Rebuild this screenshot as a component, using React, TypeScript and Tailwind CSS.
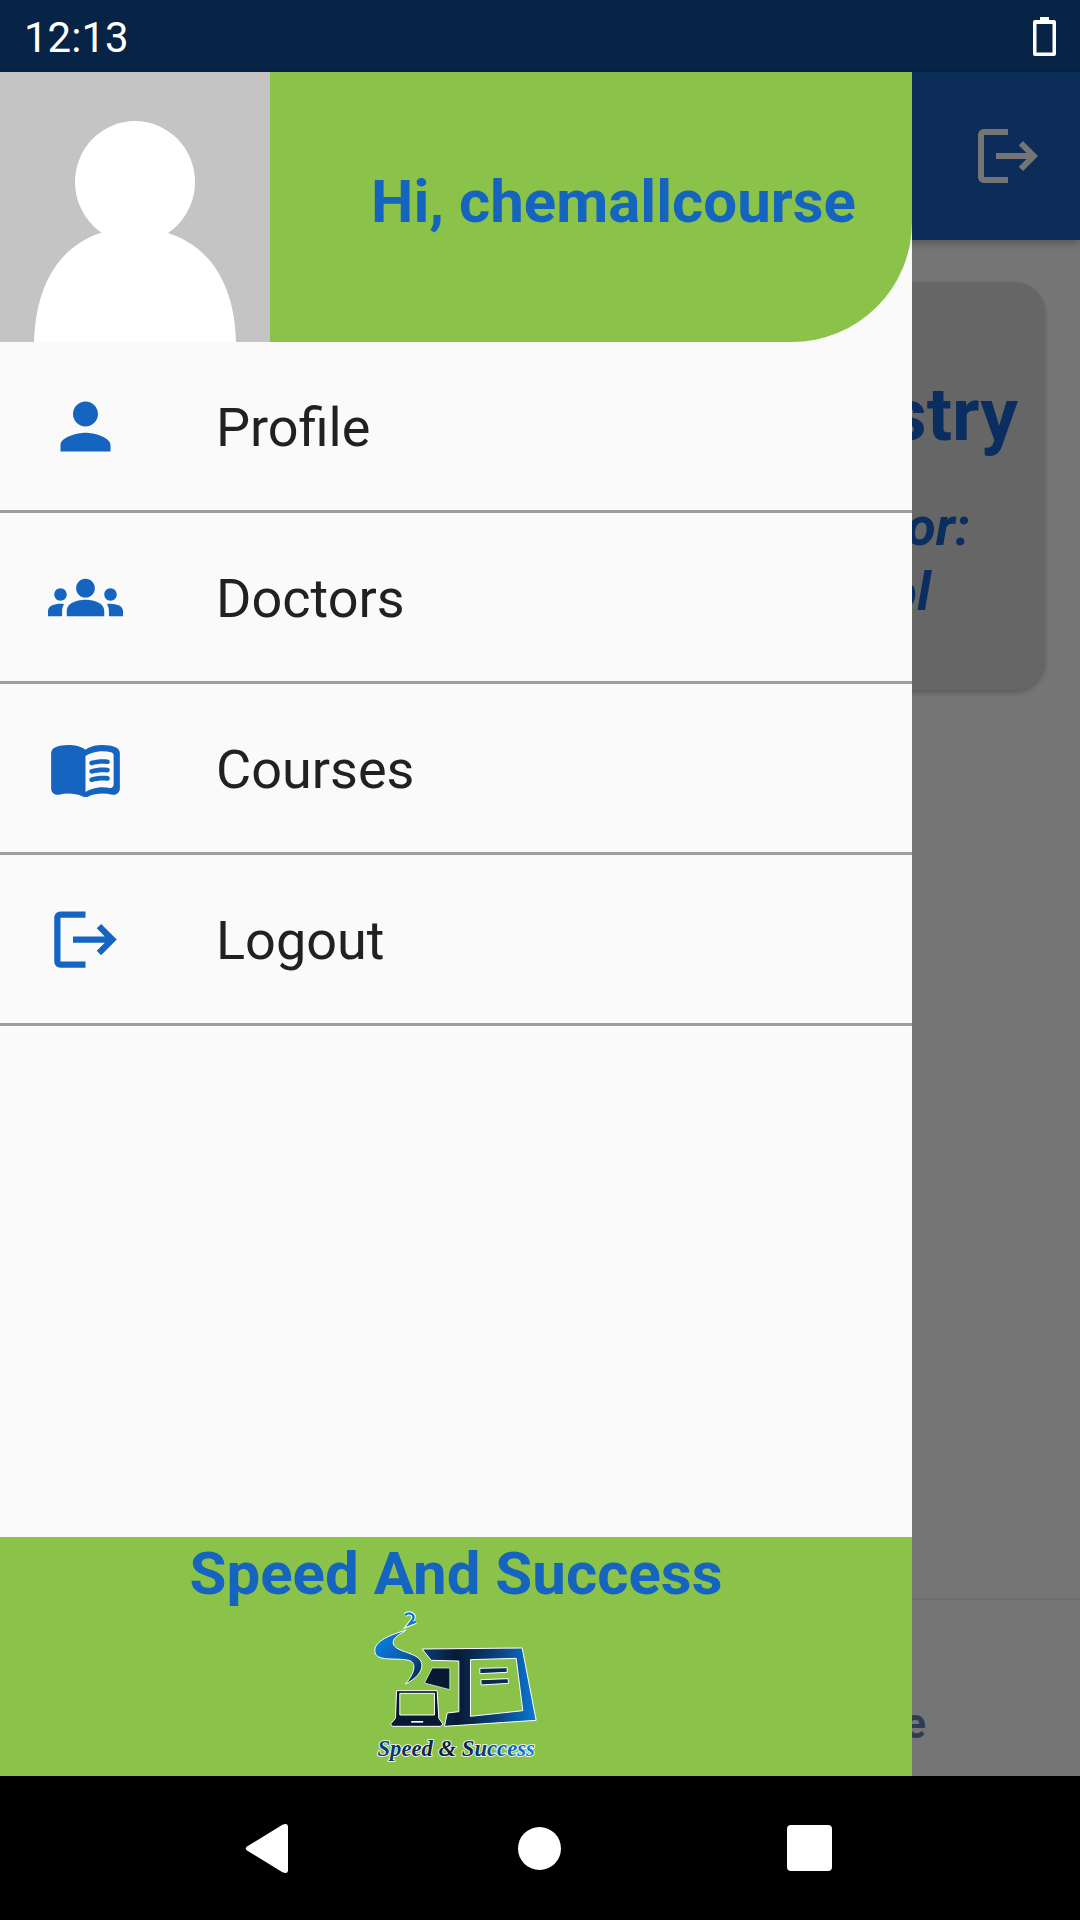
import { MdPerson, MdGroups, MdLogout } from 'react-icons/md';

// rounded menu_book, the package only has the square one
function BookIcon() {
  return (
    <svg viewBox="0 0 24 24" width={75} height={75} fill="#1565c0">
      <path d="M17.5 4.5c-1.95 0-4.05.4-5.5 1.5-1.45-1.1-3.55-1.5-5.5-1.5-1.45 0-2.99.22-4.28.79C1.49 5.62 1 6.33 1 7.14v11.28c0 1.3 1.22 2.26 2.48 1.94.98-.25 2.02-.36 3.02-.36 1.56 0 3.22.26 4.56.92.6.3 1.28.3 1.87 0 1.34-.67 3-.92 4.56-.92 1 0 2.04.11 3.02.36 1.26.33 2.48-.63 2.48-1.94V7.14c0-.81-.49-1.52-1.22-1.85-1.28-.57-2.82-.79-4.27-.79zM21 17.23c0 .63-.58 1.09-1.2.98-.75-.14-1.53-.2-2.3-.2-1.7 0-4.15.65-5.5 1.5V8c1.35-.85 3.8-1.5 5.5-1.5.92 0 1.83.09 2.7.28.46.1.8.51.8.98v9.47z" />
      <path d="M13.98 11.01c-.32 0-.61-.2-.71-.52-.13-.39.09-.82.48-.94 1.54-.5 3.53-.66 5.36-.45.41.05.71.42.66.83-.05.41-.42.71-.83.66-1.62-.19-3.39-.04-4.73.39-.08.01-.16.03-.23.03zm0 2.66c-.32 0-.61-.2-.71-.52-.13-.39.09-.82.48-.94 1.53-.5 3.53-.66 5.36-.45.41.05.71.42.66.83-.05.41-.42.71-.83.66-1.62-.19-3.39-.04-4.73.39-.08.02-.16.03-.23.03zm0 2.66c-.32 0-.61-.2-.71-.52-.13-.39.09-.82.48-.94 1.53-.5 3.53-.66 5.36-.45.41.05.71.42.66.83-.05.41-.42.7-.83.66-1.62-.19-3.39-.04-4.73.39-.08.02-.16.03-.23.03z" />
    </svg>
  );
}

const menuItems = [
  { label: 'Profile', icon: <MdPerson size={75} color="#1565c0" /> },
  { label: 'Doctors', icon: <MdGroups size={75} color="#1565c0" /> },
  { label: 'Courses', icon: <BookIcon /> },
  { label: 'Logout', icon: <MdLogout size={75} color="#1565c0" /> },
];

function Avatar() {
  return (
    <svg viewBox="0 0 270 270" className="w-[270px] h-[270px] shrink-0 bg-[#c4c4c4]">
      <ellipse cx="135" cy="110" rx="60" ry="61" fill="#fff" />
      <path d="M34 270 C36 205 65 172 103 160 L165 160 C205 172 234 205 236 270 Z" fill="#fff" />
    </svg>
  );
}

function Logo() {
  return (
    <svg viewBox="95 240 500 465" className="w-[167px] h-[155px] -translate-x-[1px]">
      <defs>
        <linearGradient id="logoBlue" x1="0" y1="0" x2="1" y2="1">
          <stop offset="0%" stopColor="#0a86ea" />
          <stop offset="60%" stopColor="#0a5aa8" />
          <stop offset="100%" stopColor="#061a33" />
        </linearGradient>
        <linearGradient id="logoBook" x1="0" y1="0" x2="1" y2="0">
          <stop offset="0%" stopColor="#0a3f78" />
          <stop offset="30%" stopColor="#071a33" />
          <stop offset="65%" stopColor="#0b3f7a" />
          <stop offset="100%" stopColor="#0a78d8" />
        </linearGradient>
        <linearGradient id="logoText" x1="0" y1="0" x2="1" y2="0">
          <stop offset="0%" stopColor="#0a3f78" />
          <stop offset="50%" stopColor="#071a33" />
          <stop offset="100%" stopColor="#0a86ea" />
        </linearGradient>
      </defs>
      <path d="M194 258 C206 248 224 256 218 270 L206 286 L226 278" fill="none" stroke="#fff" strokeWidth="13" />
      <path d="M194 258 C206 248 224 256 218 270 L206 286 L226 278" fill="none" stroke="#0a78d8" strokeWidth="7" />
      <path
        d="M197 303 C150 318 103 335 103 365 C103 400 165 385 205 394 C228 400 225 430 195 465 C235 445 255 415 238 392 C220 368 158 368 158 340 C158 325 180 315 197 303 Z"
        fill="url(#logoBlue)"
        stroke="#fff"
        strokeWidth="3"
      />
      <path
        d="M245 360 L545 357 L587 574 L312 592 L320 552 L355 548 L355 396 L272 394 Z M390 392 L390 562 L547 545 L527 388 Z"
        fill="url(#logoBook)"
        fillRule="evenodd"
        stroke="#fff"
        strokeWidth="3"
      />
      <path d="M275 417 L328 417 L328 482 L252 462 Z" fill="#071a33" stroke="#fff" strokeWidth="2" />
      <path d="M418 418 L500 416 L500 430 L418 434 Z M421 452 L503 449 L504 463 L422 468 Z" fill="#0a2a55" stroke="#fff" strokeWidth="3" />
      <path
        d="M168 485 L290 485 L295 568 L307 585 L300 592 L156 592 L150 585 L165 568 Z M178 493 L178 558 L282 558 L282 493 Z"
        fill="#071a33"
        fillRule="evenodd"
        stroke="#fff"
        strokeWidth="3"
      />
      <rect x="212" y="576" width="36" height="5" fill="#fff" />
      <text
        x="347"
        y="682"
        textAnchor="middle"
        fontFamily="'Liberation Serif', serif"
        fontStyle="italic"
        fontWeight="700"
        fontSize="68"
        fill="url(#logoText)"
        stroke="#fff"
        strokeWidth="5"
        paintOrder="stroke"
      >
        Speed &amp; Success
      </text>
    </svg>
  );
}

export default function App() {
  return (
    <div className="relative flex flex-col w-[1080px] h-[1920px] overflow-hidden font-['Roboto',sans-serif]">
      {/* status bar */}
      <div className="h-[72px] shrink-0 flex items-center justify-between pl-[24px] pr-[24px] bg-[#072345] text-white">
        <span className="mt-[3px] text-[42px] leading-none">12:13</span>
        <svg viewBox="0 0 23 39" className="w-[23px] h-[39px]">
          <path
            d="M7 0 H16 V3 H21 Q23 3 23 5 V37 Q23 39 21 39 H2 Q0 39 0 37 V5 Q0 3 2 3 H7 Z M3.5 7 V35.5 H19.5 V7 Z"
            fill="#fff"
            fillRule="evenodd"
          />
        </svg>
      </div>

      <div className="relative flex-1 flex flex-col bg-[#757575]">
        {/* dimmed page behind the drawer */}
        <div className="h-[168px] shrink-0 flex items-center justify-end pr-[36px] bg-[#0c2d5a] shadow-[0_3px_8px_rgba(0,0,0,0.25)]">
          <MdLogout size={72} color="#757575" />
        </div>
        <div className="flex-1 flex flex-col">
          <div className="mt-[42px] ml-[35px] mr-[35px] h-[408px] rounded-[30px] bg-[#666666] shadow-[0_3px_5px_rgba(0,0,0,0.2)] text-[#0a2e5f] text-right font-bold">
            <p className="mt-[90px] pr-[27px] text-[75px] leading-[84px]">Chemistry</p>
            <p className="mt-[38px] pr-[75px] text-[54px] leading-[65px] italic">Instructor:</p>
            <p className="pr-[114px] text-[54px] leading-[65px] italic">Dr. Nabol</p>
          </div>
          <div className="mt-auto h-[178px] border-t-2 border-[#6e6e6e] flex justify-end">
            <span className="mt-[100px] mr-[154px] text-[42px] leading-[48px] font-bold text-[#2c3e50]">Home</span>
          </div>
        </div>

        {/* drawer */}
        <div className="absolute inset-y-0 left-0 w-[912px] flex flex-col bg-[#fafafa]">
          <div className="h-[270px] shrink-0 flex">
            <Avatar />
            <div className="flex-1 flex items-center justify-end pr-[56px] pb-[10px] bg-[#8bc34a] rounded-br-[120px]">
              <span className="text-[60px] leading-none font-bold text-[#1565c0]">Hi, chemallcourse</span>
            </div>
          </div>
          <div className="flex-1">
            {menuItems.map(({ label, icon }) => (
              <div key={label} className="h-[171px] flex items-center border-b-[3px] border-[#9e9e9e]">
                <div className="w-[216px] pl-[48px] shrink-0 flex">{icon}</div>
                <span className="mt-[4px] text-[54px] leading-none text-[#212121]">{label}</span>
              </div>
            ))}
          </div>
          <div className="h-[239px] shrink-0 flex flex-col items-center bg-[#8bc34a]">
            <span className="mt-[2px] text-[60px] leading-[70px] font-bold text-[#1565c0]">Speed And Success</span>
            <Logo />
          </div>
        </div>
      </div>

      {/* navigation bar */}
      <div className="h-[144px] shrink-0 flex items-center justify-center pr-[4px] bg-black">
        <svg viewBox="0 0 43 49" className="w-[43px] h-[49px] mr-[230px]">
          <path d="M2 26.5 Q-0.5 24.5 2 22.5 L37.5 0.8 Q43 -1.5 43 3 V46 Q43 50.5 37.5 48.2 Z" fill="#fff" />
        </svg>
        <div className="w-[43px] h-[43px] rounded-full bg-white" />
        <div className="w-[45px] h-[46px] ml-[226px] rounded-[4px] bg-white" />
      </div>
    </div>
  );
}
